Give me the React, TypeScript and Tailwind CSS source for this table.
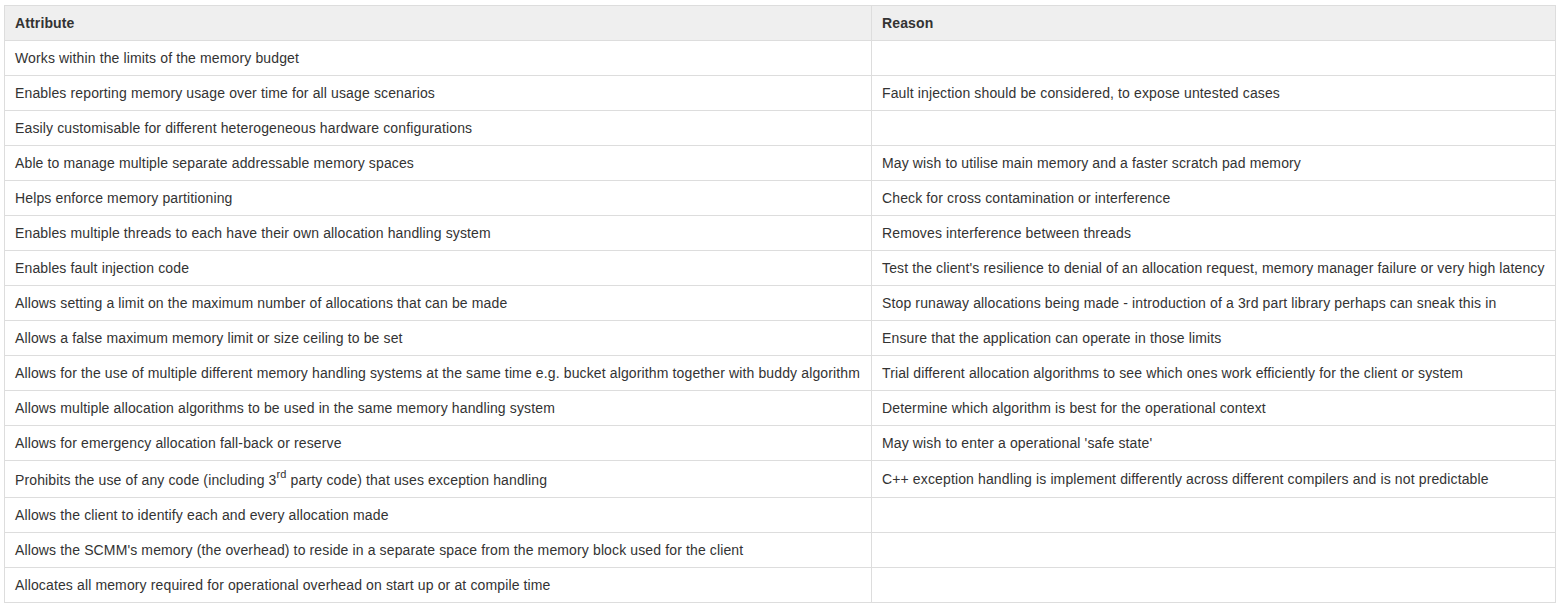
const rows: [React.ReactNode, string][] = [
  ['Works within the limits of the memory budget', ''],
  ['Enables reporting memory usage over time for all usage scenarios', 'Fault injection should be considered, to expose untested cases'],
  ['Easily customisable for different heterogeneous hardware configurations', ''],
  ['Able to manage multiple separate addressable memory spaces', 'May wish to utilise main memory and a faster scratch pad memory'],
  ['Helps enforce memory partitioning', 'Check for cross contamination or interference'],
  ['Enables multiple threads to each have their own allocation handling system', 'Removes interference between threads'],
  ['Enables fault injection code', "Test the client's resilience to denial of an allocation request, memory manager failure or very high latency"],
  ['Allows setting a limit on the maximum number of allocations that can be made', 'Stop runaway allocations being made - introduction of a 3rd part library perhaps can sneak this in'],
  ['Allows a false maximum memory limit or size ceiling to be set', 'Ensure that the application can operate in those limits'],
  ['Allows for the use of multiple different memory handling systems at the same time e.g. bucket algorithm together with buddy algorithm', 'Trial different allocation algorithms to see which ones work efficiently for the client or system'],
  ['Allows multiple allocation algorithms to be used in the same memory handling system', 'Determine which algorithm is best for the operational context'],
  ['Allows for emergency allocation fall-back or reserve', "May wish to enter a operational 'safe state'"],
  [
    <>
      Prohibits the use of any code (including 3<sup className="-top-[7px] text-[11px]">rd</sup> party code) that uses exception handling
    </>,
    'C++ exception handling is implement differently across different compilers and is not predictable',
  ],
  ['Allows the client to identify each and every allocation made', ''],
  ["Allows the SCMM's memory (the overhead) to reside in a separate space from the memory block used for the client", ''],
  ['Allocates all memory required for operational overhead on start up or at compile time', ''],
];

export default function App() {
  return (
    <div className="bg-white pl-[4px] pt-[5px] pr-[4px] font-['Liberation_Sans',Arial,sans-serif] text-[14px] leading-[18px] tracking-[0.13px] text-[#333]">
      <table className="w-[1552px] table-fixed border-collapse border border-[#ddd]">
        <thead>
          <tr className="bg-[#efefef]">
            <th className="w-[867px] border border-[#ddd] px-[10px] py-[8px] text-left font-bold">Attribute</th>
            <th className="border border-[#ddd] px-[10px] py-[8px] text-left font-bold">Reason</th>
          </tr>
        </thead>
        <tbody>
          {rows.map(([attr, reason], i) => (
            <tr key={i}>
              {/* the superscript line sits a little lower, row is 2px taller */}
              <td className={`whitespace-nowrap border border-[#ddd] px-[10px] align-middle ${i === 12 ? 'pt-[10px] pb-[8px]' : 'py-[8px]'}`}>{attr}</td>
              <td className="whitespace-nowrap border border-[#ddd] px-[10px] py-[8px] align-middle">{reason}</td>
            </tr>
          ))}
        </tbody>
      </table>
    </div>
  );
}
